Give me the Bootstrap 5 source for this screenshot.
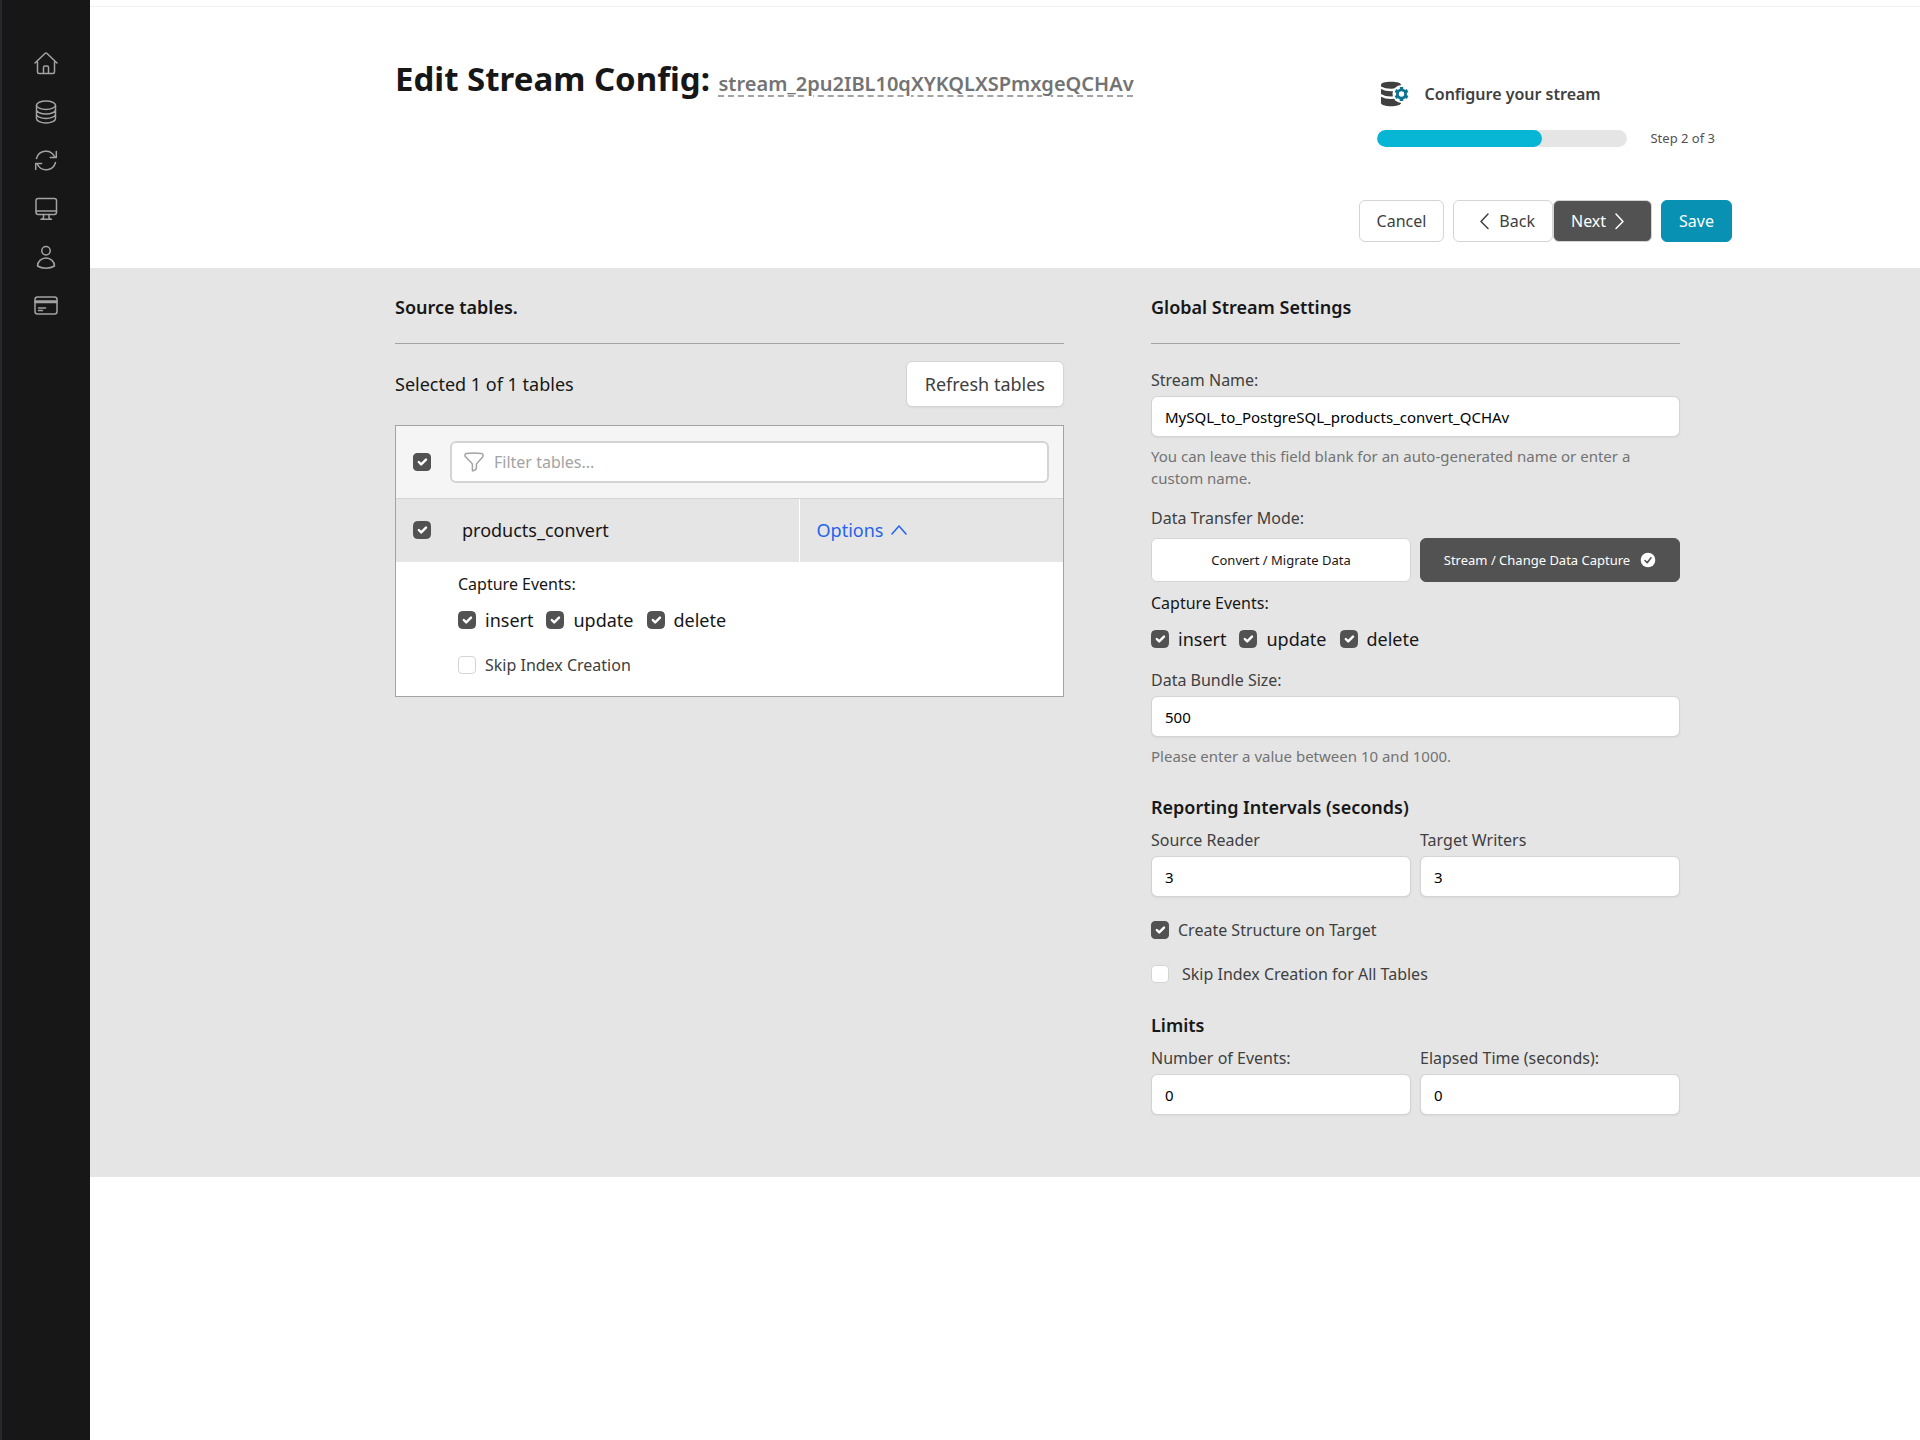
<!DOCTYPE html>
<html lang="en">
<head>
<meta charset="utf-8">
<meta name="viewport" content="width=device-width, initial-scale=1">
<title>Edit Stream Config</title>
<link href="https://cdn.jsdelivr.net/npm/bootstrap@5.3.0/dist/css/bootstrap.min.css" rel="stylesheet">
<style>
  body { font-family: "Noto Sans", sans-serif; font-size: 16px; line-height: 22px; color: #171717; background: #fff; }
  svg { display: block; flex: none; }
  .line-icon { fill: none; stroke: currentColor; stroke-width: 1.5; stroke-linecap: round; stroke-linejoin: round; }
  .side-nav { width: 90px; background: #171717; border-left: 2px solid #27272c; padding-top: 51px; }
  .side-nav a { color: #a3a3a3; margin-bottom: 24px; }
  .main-area { min-width: 0; border-top: 6px solid #fff; }
  .page-head { border-top: 1px solid #f0f0f0; padding: 50px 188px 26px 16.6667%; }
  .page-title { font-size: 33px; line-height: 44px; font-weight: 700; }
  .stream-id { font-size: 20px; line-height: 24px; font-weight: 600; color: #737373; text-decoration: underline dashed 2px #a3a3a3; text-underline-offset: 4px; }
  .step-box { padding: 24px 17px 0 18px; color: #404040; }
  .step-title { font-weight: 600; }
  .step-meter { margin-top: 20px; }
  .step-track { width: 250px; height: 17px; background: #e5e5e5; border-radius: 9px; }
  .step-track .progress-bar { background: #06b6d4; border-radius: 9px; }
  .tiny { font-size: 13px; color: #525252; }
  .btn { --bs-btn-font-size: 16px; --bs-btn-line-height: 22px; --bs-btn-border-radius: 6px; }
  .btn-plain { --bs-btn-bg: #fff; --bs-btn-color: #404040; --bs-btn-border-color: #d4d4d4; --bs-btn-hover-bg: #f5f5f5; --bs-btn-hover-border-color: #d4d4d4; }
  .btn-ink { --bs-btn-bg: #525252; --bs-btn-color: #fff; --bs-btn-border-color: #d4d4d4; --bs-btn-hover-bg: #404040; --bs-btn-hover-color: #fff; }
  .btn-save { --bs-btn-bg: #0891b2; --bs-btn-color: #fff; --bs-btn-border-color: #0891b2; --bs-btn-hover-bg: #0e7490; --bs-btn-hover-color: #fff; }
  .head-actions { gap: 9px; margin-top: 51px; }
  .head-actions .btn { height: 42px; padding: 0 17px; }
  .head-actions .btn svg { margin: 0 5px; }
  .btn-refresh { --bs-btn-font-size: 18px; height: 46px; padding: 0 18px; box-shadow: 0 1px 2px #0000000d; }
  .work { background: #e5e5e5; display: grid; grid-template-columns: minmax(0, 669fr) minmax(0, 529fr); column-gap: 87px; padding: 27px 240px 62px 16.6667%; }
  .sec-title { font-size: 18px; line-height: 24px; font-weight: 600; margin: 0; }
  .ruled { padding-bottom: 24px; border-bottom: 1px solid #a3a3a3; margin-bottom: 25px; }
  .count-row { margin: -8px 0 18px; font-size: 18px; }
  .tbl-wrap { border: 1px solid #a3a3a3; }
  .tbl-wrap table { width: 100%; }
  .filter-row th { background: #f5f5f5; height: 72px; padding: 0 14px 0 17px; font-weight: 400; }
  .filter-box { height: 42px; border: 2px solid #d4d4d4; border-radius: 6px; background: #fff; padding: 0 12px; margin-left: 19px; gap: 10px; color: #a3a3a3; }
  .filter-box input { border: 0; outline: 0; min-width: 0; padding: 0; }
  .filter-box input::placeholder { color: #a3a3a3; }
  .name-row td { background: #e5e5e5; height: 64px; border-top: 1px solid #d4d4d4; padding: 0 17px; font-size: 18px; }
  .name-row td + td { width: 264px; border-left: 1px solid #fff; }
  .name-row label { margin-left: 31px; }
  .btn-options { border: 0; background: none; padding: 0; color: #2563eb; }
  .detail-row td { background: #fff; height: 134px; padding: 11px 62px; vertical-align: top; }
  .tick { width: 18px; height: 18px; margin: 0; border: 1px solid #d4d4d4; border-radius: 4px; flex: none; background-color: #fff; }
  .tick:checked { background-color: #525252; border-color: #525252; background-size: 16px; }
  .tick-row { display: flex; align-items: center; gap: 9px; }
  .events { font-size: 18px; line-height: 24px; gap: 13px; margin-top: 13px; }
  .lbl { color: #404040; margin-bottom: 5px; display: block; }
  .lbl.tick-row { display: flex; margin-top: 22px; }
  .hint { color: #737373; font-size: 15px; margin-top: 8px; }
  .form-control { font-size: 15px; line-height: 22px; height: 41px; color: #000; border: 1px solid #d4d4d4; border-radius: 6px; padding: 0 13px; box-shadow: 0 1px 2px #0000000d; }
  .field-group { margin-top: 18px; }
  .mode-group { margin-bottom: 10px; }
  .mode-group .lbl { margin-bottom: 9px; }
  .mode { height: 44px; --bs-btn-font-size: 13px; padding: 0 12px; }
  .mode.btn-plain { --bs-btn-color: #171717; }
  .mode.btn-ink { --bs-btn-border-color: #525252; }
  .pair { display: grid; grid-template-columns: 1fr 1fr; gap: 9px; }
  .sub-title { margin: 28px 0 10px; }
</style>
</head>
<body>
<div class="d-flex min-vh-100">
  <nav class="side-nav flex-shrink-0 d-flex flex-column align-items-center" aria-label="Main">
    <a href="#" aria-label="Home"><svg class="line-icon" width="24" height="25" viewBox="0 0 24 24"><path d="M1 11.5 11.2 1.8q.8-.7 1.6 0L23 11.5M3.5 10v10.500q0 1.500 1.500 1.500h14q1.500 0 1.500-1.500V10M9.500 21.500v-5.500q0-1.500 1.500-1.500h2q1.500 0 1.500 1.500v5.500"/></svg></a>
    <a href="#" aria-label="Databases"><svg class="line-icon" width="24" height="24" viewBox="0 0 24 24"><ellipse cx="12" cy="5.200" rx="9.500" ry="4.200"/><path d="M2.500 5.200v13.300C2.500 21 6.700 23 12 23s9.500-2 9.500-4.500V5.200M2.500 9.800C2.500 12 6.700 14 12 14s9.500-2 9.500-4.200M2.500 14.200c0 2.300 4.200 4.200 9.500 4.200s9.500-1.900 9.500-4.200"/></svg></a>
    <a href="#" aria-label="Streams"><svg class="line-icon" width="24" height="25" viewBox="0 0 24 24"><path d="M2.500 10A9.700 9.700 0 0 1 20.500 8M22.300 3v6h-6M21.500 14A9.700 9.700 0 0 1 3.500 16M1.700 21v-6h6"/></svg></a>
    <a href="#" aria-label="Monitor"><svg class="line-icon" width="24" height="24" viewBox="0 0 24 24"><rect x="2" y="1.500" width="20.500" height="16" rx="2.200"/><path d="M2 14h20.500M9.500 17.500v3.500l-1.500 1.200M15 17.500v3.500l1.500 1.200M7 22.300h10.500"/></svg></a>
    <a href="#" aria-label="Account"><svg class="line-icon" width="24" height="25" viewBox="0 0 24 24"><circle cx="12" cy="5.200" r="4.200"/><path d="M3.500 20.500a8.500 8 0 0 1 17 0q-3.500 2.200-8.500 2.200t-8.500-2.200z"/></svg></a>
    <a href="#" aria-label="Billing"><svg class="line-icon" width="24" height="24" viewBox="0 0 24 24"><rect x="1" y="3" width="22" height="17" rx="2.500"/><path d="M1 7h22M1 8.500h22M4.500 14h7M4.500 16.500h4"/></svg></a>
  </nav>
  <main class="main-area flex-grow-1">
    <header class="page-head d-flex justify-content-between">
      <div class="d-flex align-items-start">
        <h1 class="page-title m-0">Edit Stream Config: <span class="stream-id">stream_2pu2IBL10qXYKQLXSPmxgeQCHAv</span></h1>
      </div>
      <div class="flex-shrink-0">
        <div class="step-box">
          <div class="d-flex align-items-center ps-1">
            <svg width="28" height="26" viewBox="0 0 28 26" class="me-3"><path fill="#404040" d="M0 4C0 2 4 .8 10 .8S20 2 20 4v1q-4 2.800-10 2.800T0 5.500zM0 8q4 2.200 10 2.200T20 8v4.500q-4 3-10 3t-10-2.500zM0 15.800Q4 18 10 18t10-2.200V22c0 2-4.500 3.200-10 3.200S0 24 0 22z"/><circle cx="20.500" cy="13" r="9" fill="#fff"/><circle cx="20.500" cy="13" r="4.100" fill="none" stroke="#0e7490" stroke-width="2.800"/><path d="M20.500 8.800V6M20.500 17.200V20M16.860 10.900l-2.420-1.400M24.140 10.900l2.420-1.400M16.860 15.100l-2.420 1.400M24.140 15.100l2.420 1.400" stroke="#0e7490" stroke-width="3.400"/></svg>
            <span class="step-title">Configure your stream</span>
          </div>
          <div class="step-meter d-flex align-items-center">
            <div class="progress step-track" role="progressbar" aria-label="Setup progress" aria-valuenow="66" aria-valuemin="0" aria-valuemax="100"><div class="progress-bar" style="width:66%"></div></div>
            <span class="tiny ms-auto">Step 2 of 3</span>
          </div>
        </div>
        <div class="head-actions d-flex justify-content-end">
          <button type="button" class="btn btn-plain">Cancel</button>
          <div class="d-flex">
            <button type="button" class="btn btn-plain d-flex align-items-center"><svg class="line-icon" width="18" height="18" viewBox="0 0 18 18"><path d="M12 2 5 9.500l7 7"/></svg>Back</button>
            <button type="button" class="btn btn-ink d-flex align-items-center">Next<svg class="line-icon" width="18" height="18" viewBox="0 0 18 18"><path d="m5 2 7 7.500-7 7"/></svg></button>
          </div>
          <button type="button" class="btn btn-save">Save</button>
        </div>
      </div>
    </header>

    <div class="work">
      <section>
        <h2 class="sec-title ruled">Source tables.</h2>
        <div class="count-row d-flex justify-content-between align-items-center">
          <span>Selected 1 of 1 tables</span>
          <button type="button" class="btn btn-plain btn-refresh">Refresh tables</button>
        </div>
        <div class="tbl-wrap">
          <table>
            <thead>
              <tr class="filter-row"><th colspan="2"><div class="d-flex align-items-center">
                <input type="checkbox" class="form-check-input tick" checked aria-label="Select all tables">
                <div class="filter-box d-flex align-items-center flex-grow-1">
                  <svg class="line-icon" width="20" height="20" viewBox="0 0 20 20"><path d="M1 4V2.800Q1.200 1.700 2.500 1.500q7.500-1 15 0Q19 1.700 19 2.800V4q0 .6-.5 1.200l-5.500 6q-.6.600-.600 1.500v3.300q0 1-.8 1.500l-2 1.200q-1.200.600-1.200-.7v-5.300q0-.9-.6-1.500l-5.800-6Q1 4.600 1 4z"/></svg>
                  <input type="text" class="flex-grow-1" placeholder="Filter tables..." aria-label="Filter tables">
                </div>
              </div></th></tr>
            </thead>
            <tbody>
              <tr class="name-row">
                <td><div class="d-flex align-items-center"><input type="checkbox" id="tbl" class="form-check-input tick" checked><label for="tbl">products_convert</label></div></td>
                <td><button type="button" class="btn-options d-flex align-items-center" aria-expanded="true">Options<svg class="line-icon ms-2" width="16" height="16" viewBox="0 0 16 16"><path d="m1 12 7-8 7 8"/></svg></button></td>
              </tr>
              <tr class="detail-row"><td colspan="2">
                <div>Capture Events:</div>
                <div class="events d-flex">
                  <label class="tick-row"><input type="checkbox" class="form-check-input tick" checked>insert</label>
                  <label class="tick-row"><input type="checkbox" class="form-check-input tick" checked>update</label>
                  <label class="tick-row"><input type="checkbox" class="form-check-input tick" checked>delete</label>
                </div>
                <label class="lbl tick-row"><input type="checkbox" class="form-check-input tick">Skip Index Creation</label>
              </td></tr>
            </tbody>
          </table>
        </div>
      </section>

      <section>
        <h2 class="sec-title ruled">Global Stream Settings</h2>
        <label class="lbl" for="sname">Stream Name:</label>
        <input id="sname" type="text" class="form-control" value="MySQL_to_PostgreSQL_products_convert_QCHAv">
        <div class="hint">You can leave this field blank for an auto-generated name or enter a custom name.</div>
        <div class="field-group mode-group" role="group" aria-labelledby="mode-label">
          <div class="lbl" id="mode-label">Data Transfer Mode:</div>
          <div class="pair">
            <button type="button" class="btn btn-plain mode">Convert / Migrate Data</button>
            <button type="button" class="btn btn-ink mode d-flex align-items-center justify-content-center">Stream / Change Data Capture<svg class="ms-2" width="18" height="16" viewBox="0 0 18 16"><circle cx="10" cy="8" r="7.300" fill="#fff"/><path d="m7 8.500 2.200 2.200L13 5.800" fill="none" stroke="#525252" stroke-width="1.600" stroke-linecap="round" stroke-linejoin="round"/></svg></button>
          </div>
        </div>
        <div>Capture Events:</div>
        <div class="events d-flex">
          <label class="tick-row"><input type="checkbox" class="form-check-input tick" checked>insert</label>
          <label class="tick-row"><input type="checkbox" class="form-check-input tick" checked>update</label>
          <label class="tick-row"><input type="checkbox" class="form-check-input tick" checked>delete</label>
        </div>
        <div class="field-group">
          <label class="lbl" for="bundle">Data Bundle Size:</label>
          <input id="bundle" type="text" class="form-control" value="500">
          <div class="hint">Please enter a value between 10 and 1000.</div>
        </div>
        <h3 class="sec-title sub-title">Reporting Intervals (seconds)</h3>
        <div class="pair">
          <div><label class="lbl" for="rd">Source Reader</label><input id="rd" type="text" class="form-control" value="3"></div>
          <div><label class="lbl" for="wr">Target Writers</label><input id="wr" type="text" class="form-control" value="3"></div>
        </div>
        <label class="lbl tick-row"><input type="checkbox" class="form-check-input tick" checked>Create Structure on Target</label>
        <label class="lbl tick-row"><input type="checkbox" class="form-check-input tick me-1">Skip Index Creation for All Tables</label>
        <h3 class="sec-title sub-title">Limits</h3>
        <div class="pair">
          <div><label class="lbl" for="ev">Number of Events:</label><input id="ev" type="text" class="form-control" value="0"></div>
          <div><label class="lbl" for="el">Elapsed Time (seconds):</label><input id="el" type="text" class="form-control" value="0"></div>
        </div>
      </section>
    </div>
  </main>
</div>
<script src="https://cdn.jsdelivr.net/npm/bootstrap@5.3.0/dist/js/bootstrap.bundle.min.js"></script>
</body>
</html>
